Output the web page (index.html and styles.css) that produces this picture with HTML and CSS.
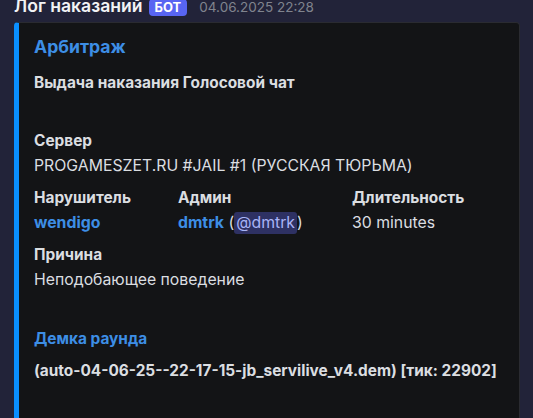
FILE: index.html
```html
<!DOCTYPE html>
<html lang="ru">
<head>
<meta charset="utf-8">
<link rel="stylesheet" href="styles.css">
</head>
<body>
<div class="message">
  <div class="header">
    <span class="author">Лог наказаний</span>
    <span class="bot">БОТ</span>
    <span class="time">04.06.2025 22:28</span>
  </div>
  <div class="embed">
    <div class="title">Арбитраж</div>
    <div class="desc">Выдача наказания Голосовой чат</div>
    <div class="fields">
      <div class="field full">
        <div class="fname">Сервер</div>
        <div class="fvalue">PROGAMESZET.RU #JAIL #1 (РУССКАЯ ТЮРЬМА)</div>
      </div>
      <div class="field">
        <div class="fname">Нарушитель</div>
        <div class="fvalue"><span class="link">wendigo</span></div>
      </div>
      <div class="field">
        <div class="fname">Админ</div>
        <div class="fvalue"><span class="link">dmtrk</span> (<span class="mention">@dmtrk</span>)</div>
      </div>
      <div class="field">
        <div class="fname">Длительность</div>
        <div class="fvalue">30 minutes</div>
      </div>
      <div class="field full">
        <div class="fname">Причина</div>
        <div class="fvalue">Неподобающее поведение</div>
      </div>
    </div>
    <div class="demo-title">Демка раунда</div>
    <div class="demo">(auto-04-06-25--22-17-15-jb_servilive_v4.dem) [тик: 22902]</div>
  </div>
</div>
</body>
</html>
```
FILE: styles.css
```css
html, body {
  margin: 0;
  padding: 0;
  background: #222339;
  overflow: hidden;
  height: 418px;
}
body {
  font-family: Inter, "Noto Sans", sans-serif;
  color: #dbdee1;
}
.message {
  padding-left: 14px;
}
.header {
  display: flex;
  align-items: baseline;
  height: 22px;
  line-height: 22px;
  margin-top: -5px;
  white-space: nowrap;
}
.author {
  font-size: 17.6px;
  font-weight: 600;
  color: #f2f3f5;
}
.bot {
  margin-left: 6px;
  background: #5865f2;
  color: #fff;
  font-size: 13px;
  font-weight: 700;
  border-radius: 4px;
  padding: 0 6px 1px;
  line-height: 16px;
}
.time {
  margin-left: 12px;
  font-size: 13.5px;
  color: #80848e;
}
.embed {
  margin-top: 5px;
  width: 506px;
  height: 420px;
  box-sizing: border-box;
  background: #131416;
  border: 1px solid #2a2b31;
  border-left: 5px solid #0a8fff;
  border-radius: 4px;
  padding: 13px 16px 16px 15px;
}
.title {
  font-size: 17.6px;
  font-weight: 700;
  color: #3d8ee5;
  line-height: 22px;
}
.desc {
  margin-top: 15px;
  font-size: 15.4px;
  font-weight: 700;
  line-height: 20px;
  color: #dbdee1;
}
.fields {
  margin-top: 37px;
  display: grid;
  grid-template-columns: 144px 174px 1fr;
  row-gap: 8px;
}
.field.full {
  grid-column: 1 / -1;
}
.fname {
  font-size: 15.4px;
  font-weight: 700;
  line-height: 22px;
  color: #dbdee1;
}
.fvalue {
  font-size: 15.8px;
  line-height: 27px;
  color: #dbdee1;
}
.link {
  color: #3d8ee5;
  font-weight: 700;
}
.mention {
  background: #2e3163;
  color: #a9b4f7;
  border-radius: 3px;
  padding: 1px 2px 2px;
}
.demo-title {
  margin-top: 35px;
  font-size: 15.4px;
  font-weight: 700;
  color: #3d8ee5;
  line-height: 22px;
}
.demo {
  margin-top: 10px;
  font-size: 15.4px;
  font-weight: 700;
  line-height: 22px;
  color: #dbdee1;
}
```
